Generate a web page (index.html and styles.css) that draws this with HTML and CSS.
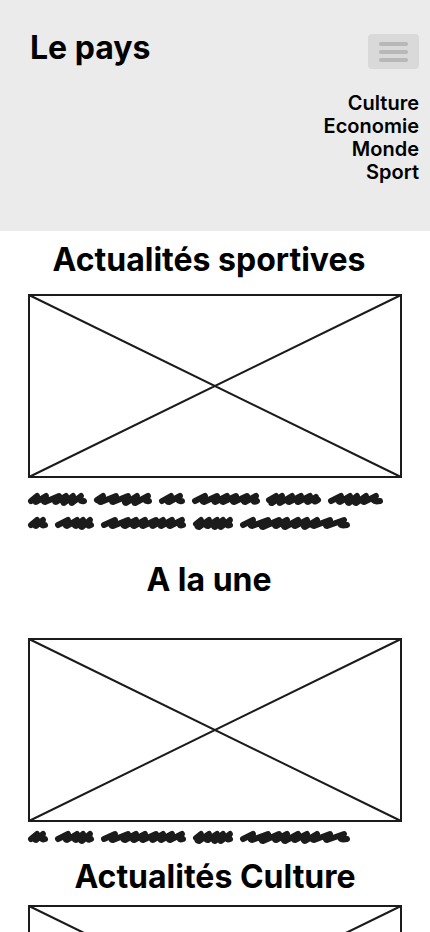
FILE: index.html
```html
<!DOCTYPE html>
<html lang="fr">
<head>
<meta charset="utf-8">
<meta name="viewport" content="width=device-width, initial-scale=1">
<title>Le pays</title>
<link rel="stylesheet" href="styles.css">
</head>
<body>
<svg class="defs" aria-hidden="true">
  <symbol id="line-a" viewBox="0 0 374 24" overflow="visible">
    <path d="M3 13L9 8Q6 14 8 14L18 8Q14 14 17 14L31 8Q25 14 28 14L38 8Q34 15 36 15L45 8Q42 15 44 15L53 8Q50 14 56 13"/>
    <path d="M69 12L75 8Q69 14 73 14L88 8Q82 14 85 14L100 8Q95 15 98 15L109 8Q105 15 107 15L120 8Q115 14 121 13"/>
    <path d="M134 13L143 8Q137 14 141 14L152 8Q148 14 154 13"/>
    <path d="M167 13L177 8Q173 14 176 14L189 8Q185 14 187 14L199 8Q192 14 195 14L208 8Q203 14 206 14L219 8Q214 14 217 14L228 8Q223 16 229 13"/>
    <path d="M241 12L248 8Q241 15 244 15L254 8Q250 15 252 15L264 8Q258 14 261 14L273 8Q268 14 270 14L282 8Q277 14 280 14L288 9Q284 16 290 12"/>
    <path d="M303 13L313 8Q309 14 312 14L322 8Q318 15 321 15L329 8Q325 15 328 15L338 8Q333 14 336 14L348 8Q342 15 352 13"/>
  </symbol>
  <symbol id="line-b" viewBox="0 0 374 24" overflow="visible">
    <path d="M3 13L9 8Q5 14 8 14L15 8Q12 15 17 13"/>
    <path d="M30 13L40 8Q36 14 39 14L49 8Q45 14 48 14L55 8Q51 15 54 15L62 8Q58 16 63 13"/>
    <path d="M76 13L87 8Q81 14 85 14L100 8Q93 14 97 14L108 8Q103 14 106 14L117 8Q112 14 115 14L128 8Q122 14 125 14L135 8Q131 14 133 14L144 8Q139 14 142 14L154 8Q149 15 155 13"/>
    <path d="M168 12L173 8Q167 15 171 15L181 8Q176 14 180 14L189 8Q184 15 187 15L195 8Q191 15 193 15L202 8Q197 15 202 13"/>
    <path d="M215 13L225 8Q221 14 224 14L240 8Q231 15 235 15L251 8Q245 14 248 14L259 8Q254 15 257 15L270 8Q264 14 267 14L279 8Q274 15 277 15L289 8Q282 14 286 14L302 8Q296 14 299 14L316 8Q308 15 319 13"/>
  </symbol>
</svg>

<header class="header">
  <a class="brand" href="#">Le pays</a>
  <div class="menu">
    <button class="menu-button" type="button" aria-label="Menu" aria-expanded="true" aria-controls="menu-list">
      <span class="bar"></span><span class="bar"></span><span class="bar"></span>
    </button>
    <nav class="menu-list" id="menu-list">
      <a href="#culture">Culture</a>
      <a href="#">Economie</a>
      <a href="#">Monde</a>
      <a href="#sport">Sport</a>
    </nav>
  </div>
</header>

<main>
  <section class="article" id="sport">
    <h2 class="title">Actualités sportives</h2>
    <svg class="image" viewBox="0 0 374 184" aria-hidden="true"><path d="M1 1H373V183H1ZM1 1L373 183M373 1L1 183"/></svg>
    <div class="caption">
      <svg class="scribble" viewBox="0 0 374 24" aria-hidden="true"><use href="#line-a"/></svg>
      <svg class="scribble" viewBox="0 0 374 24" aria-hidden="true"><use href="#line-b"/></svg>
    </div>
  </section>

  <section class="article featured">
    <h2 class="title">A la une</h2>
    <svg class="image" viewBox="0 0 374 184" aria-hidden="true"><path d="M1 1H373V183H1ZM1 1L373 183M373 1L1 183"/></svg>
    <div class="caption short">
      <svg class="scribble" viewBox="0 0 374 24" aria-hidden="true"><use href="#line-b"/></svg>
    </div>
  </section>

  <section class="article culture" id="culture">
    <h2 class="title">Actualités Culture</h2>
    <svg class="image" viewBox="0 0 374 184" aria-hidden="true"><path d="M1 1H373V183H1ZM1 1L373 183M373 1L1 183"/></svg>
  </section>
</main>
</body>
</html>
```
FILE: styles.css
```css
* {
  box-sizing: border-box;
}

html {
  scrollbar-width: none;
}

body {
  margin: 0;
  background: #fff;
  color: #000;
  font-family: Inter, sans-serif;
}

a {
  color: inherit;
  text-decoration: none;
}

.defs {
  display: none;
}

.header {
  display: flex;
  justify-content: space-between;
  align-items: flex-start;
  padding: 28px 11px 47px 30px;
  background: #ebebeb;
}

.brand,
.title {
  font-size: 32px;
  font-weight: 700;
  line-height: 40px;
}

.menu {
  display: flex;
  flex-direction: column;
  align-items: flex-end;
  gap: 23px;
  padding-top: 6px;
}

.menu-button {
  display: flex;
  flex-direction: column;
  justify-content: center;
  align-items: center;
  gap: 4px;
  width: 51px;
  height: 35px;
  padding: 0;
  border: 0;
  border-radius: 4px;
  background: #d9d9d9;
}

.bar {
  width: 29px;
  height: 4px;
  border-radius: 2px;
  background: #b8b8b8;
}

.menu-list {
  display: flex;
  flex-direction: column;
  align-items: flex-end;
  font-size: 20px;
  font-weight: 600;
  line-height: 23px;
}

.article {
  display: flex;
  flex-direction: column;
  padding: 9px 28px 0;
}

.title {
  margin: 0 12px 14px 0;
  text-align: center;
}

.image {
  display: block;
  width: 100%;
  fill: none;
  stroke: #1b1b1b;
  stroke-width: 2;
}

.caption {
  padding: 10px 0 15px;
}

.scribble {
  display: block;
  width: 100%;
  overflow: visible;
  fill: none;
  stroke: #1b1b1b;
  stroke-width: 6;
  stroke-linecap: round;
  stroke-linejoin: round;
}

.featured .title {
  margin-bottom: 38px;
}

.short {
  padding: 4px 0 0;
}

.culture {
  padding-top: 7px;
}

.culture .title {
  margin: 0 0 8px;
}
```
